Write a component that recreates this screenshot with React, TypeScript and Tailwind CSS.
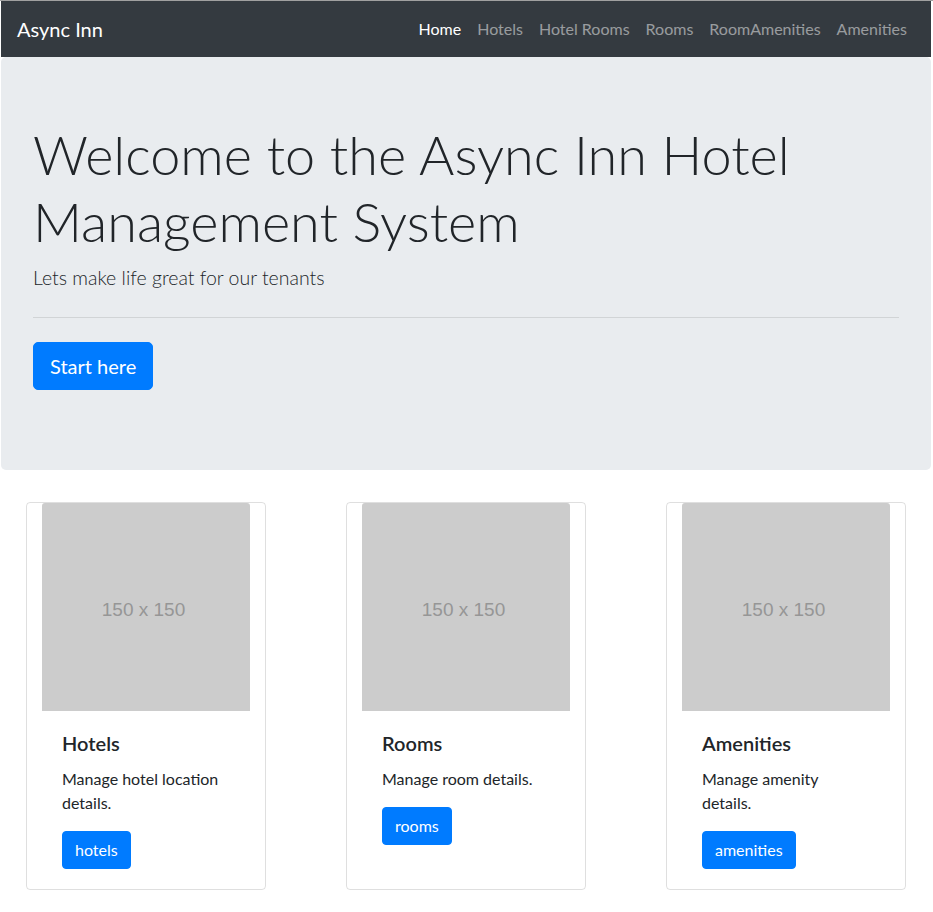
const links = ["Home", "Hotels", "Hotel Rooms", "Rooms", "RoomAmenities", "Amenities"];

const cards = [
  { title: "Hotels", text: "Manage hotel location details.", button: "hotels" },
  { title: "Rooms", text: "Manage room details.", button: "rooms" },
  { title: "Amenities", text: "Manage amenity details.", button: "amenities" },
];

function Placeholder() {
  return (
    <div className="w-[208px] h-[208px] bg-[#cccccc] flex items-center justify-center rounded-t-[3px]">
      <span className="pt-[6px] pr-[5px] text-[19px] text-[#969696] font-['Liberation_Sans',Arial,sans-serif]">150 x 150</span>
    </div>
  );
}

export default function App() {
  return (
    <div className="min-h-screen bg-white border-t border-[#a0a0a0] pl-[1px] pr-[2px] text-[#212529] font-['Lato','Liberation_Sans',sans-serif]">
      <nav className="h-[56px] bg-[#343a40] px-4 flex items-center justify-between">
        <a className="text-white text-[20px] leading-[30px]">Async Inn</a>
        <ul className="flex">
          {links.map((l, i) => (
            <li key={l}>
              <a className={`px-2 text-[16px] leading-6 ${i === 0 ? "text-white" : "text-white/50"}`}>{l}</a>
            </li>
          ))}
        </ul>
      </nav>

      <section className="bg-[#e9ecef] rounded-[5px] px-8 pt-16 pb-16 mb-8">
        <h1 className="text-[54px] leading-[67.2px] font-light mb-2">
          Welcome to the Async Inn Hotel Management System
        </h1>
        <p className="text-[19.5px] leading-[30px] font-light">Lets make life great for our tenants</p>
        <hr className="my-6 border-t border-black/10" />
        <p className="mb-4">
          <a className="inline-block bg-[#007bff] border border-[#007bff] text-white text-[20px] leading-[30px] px-4 py-2 rounded-[5px]">
            Start here
          </a>
        </p>
      </section>

      <div className="flex gap-[80px] pl-[25px]">
        {cards.map((c) => (
          <div key={c.title} className="w-[240px] border border-black/[0.125] rounded-[4px] flex flex-col">
            <div className="mx-[15px]">
              <Placeholder />
              <div className="p-5">
                <h5 className="text-[20px] leading-6 font-semibold mb-3">{c.title}</h5>
                <p className="text-[16px] leading-6 mb-4">{c.text}</p>
                <a className="inline-block bg-[#007bff] border border-[#007bff] text-white text-[16px] leading-6 px-3 py-1.5 rounded-[4px]">
                  {c.button}
                </a>
              </div>
            </div>
          </div>
        ))}
      </div>
    </div>
  );
}
